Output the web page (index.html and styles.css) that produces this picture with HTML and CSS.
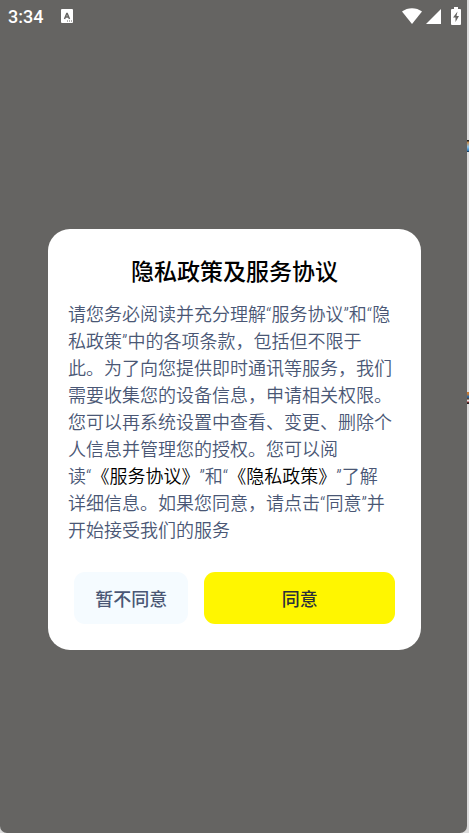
FILE: index.html
```html
<!DOCTYPE html>
<html lang="zh-CN">
<head>
    <meta charset="UTF-8">
    <meta name="viewport" content="width=device-width, initial-scale=1.0">
    <title>隐私政策及服务协议</title>
    <link rel="stylesheet" href="styles.css">
</head>
<body>
    <div class="screen">
        <header class="statusBar">
            <span class="time">3:34</span>
            <svg class="noticeIcon" width="12" height="14" viewBox="0 0 12 14">
                <rect width="12" height="14" rx="1" fill="#fff"/>
                <path d="M3.5 10 L6 4 L8.5 10 M4.2 8 H7.8" fill="none" stroke="#656462" stroke-width="1.5" stroke-linejoin="bevel"/>
                <path d="M6 12h1M8 12h1M10 12h1" stroke="#656462"/>
            </svg>
            <div class="systemIcons">
                <svg width="20" height="16" viewBox="0 0 20 16">
                    <path d="M0 3.5 C5.5-1 14.5-1 20 3.5 L10 16 Z" fill="#fff"/>
                </svg>
                <svg width="15" height="16" viewBox="0 0 15 16">
                    <path d="M15 1 V16 H0 Z" fill="#fff"/>
                </svg>
                <svg class="battery" width="10" height="18" viewBox="0 0 10 18">
                    <path d="M3 0h4v2h2q1 0 1 1v14q0 1-1 1H1q-1 0-1-1V3q0-1 1-1h2Z" fill="#fff"/>
                    <path d="M6.5 4.5 L2 10.5 H4.5 V15 L8 9 H5.5 Z" fill="#656462"/>
                </svg>
            </div>
        </header>

        <main class="overlay">
            <section class="dialog" role="dialog" aria-labelledby="dialogTitle">
                <h1 id="dialogTitle">隐私政策及服务协议</h1>
                <p class="message">请您务必阅读并充分理解“服务协议”和“隐私政策”中的各项条款，包括但不限于此。为了向您提供即时通讯等服务，我们需要收集您的设备信息，申请相关权限。您可以再系统设置中查看、变更、删除个人信息并管理您的授权。您可以阅<span class="keep">读“<a href="#">《服务协议》</a>”</span>和“<a href="#">《隐私政策》</a>”了解详细信息。如果您同意，请点击“同意”并开始接受我们的服务</p>
                <div class="buttons">
                    <button class="refuse" type="button">暂不同意</button>
                    <button class="agree" type="button">同意</button>
                </div>
            </section>
        </main>
    </div>
    <div class="speck speckTop"></div>
    <div class="speck speckBottom"></div>
</body>
</html>
```
FILE: styles.css
```css
body {
    margin: 0;
    background-color: #dcdcdc;
    font-family: Roboto, "Noto Sans CJK SC", sans-serif;
    position: relative;
    overflow-x: hidden;
}

.screen {
    min-height: 100vh;
    margin-right: 2px;
    display: flex;
    flex-direction: column;
    background-color: #656462;
    border-radius: 0 0 7px 7px;
}

.statusBar {
    display: flex;
    align-items: center;
    height: 32px;
    padding: 0 6px 0 8px;
    color: #fff;
}

.time {
    font-size: 18px;
    font-weight: 500;
}

.noticeIcon {
    margin-left: 18px;
}

.systemIcons {
    display: flex;
    align-items: center;
    gap: 4px;
    margin-left: auto;
}

.battery {
    margin-left: 6px;
}

.overlay {
    flex: 1;
    display: flex;
    align-items: center;
    padding: 14px 46px 0 48px;
}

.dialog {
    flex: 1;
    box-sizing: border-box;
    padding: 28px 20px 26px;
    background-color: #fff;
    border-radius: 22px;
}

.dialog h1 {
    margin: 0 0 12px;
    color: #000;
    font-size: 23px;
    font-weight: 500;
    line-height: 32px;
    text-align: center;
}

.message {
    margin: 0 7px 28px 0;
    color: #4a5775;
    font-size: 18px;
    font-weight: 350;
    line-height: 27px;
    text-spacing-trim: space-all;
}

.message a {
    color: #000;
    text-decoration: none;
}

.keep {
    white-space: nowrap;
}

.buttons {
    display: grid;
    grid-template-columns: 3fr 5fr;
    gap: 16px;
    padding: 0 6px;
}

.buttons button {
    height: 52px;
    padding: 0;
    border: none;
    border-radius: 11px;
    font-family: inherit;
    font-size: 18px;
    font-weight: 500;
    cursor: pointer;
}

.buttons .refuse {
    background-color: #f5fbff;
    color: #4a5775;
}

.buttons .agree {
    background-color: #fff600;
    color: #2b2f3a;
}

/* slivers of the page showing past the right edge */
.speck {
    position: absolute;
    right: 0;
    width: 2px;
    height: 12px;
}

.speckTop {
    top: 140px;
    background: linear-gradient(#222 1px, #c98a45 2px, #8fc6ee 7px, #2b78b8 11px, #111 12px);
}

.speckBottom {
    top: 392px;
    background: linear-gradient(#c77a34 2px, #1c66ad 5px, #5b3a20 7px, #ddd 8px, #eee 9px, #a33 10px, #222 11px);
}
```
